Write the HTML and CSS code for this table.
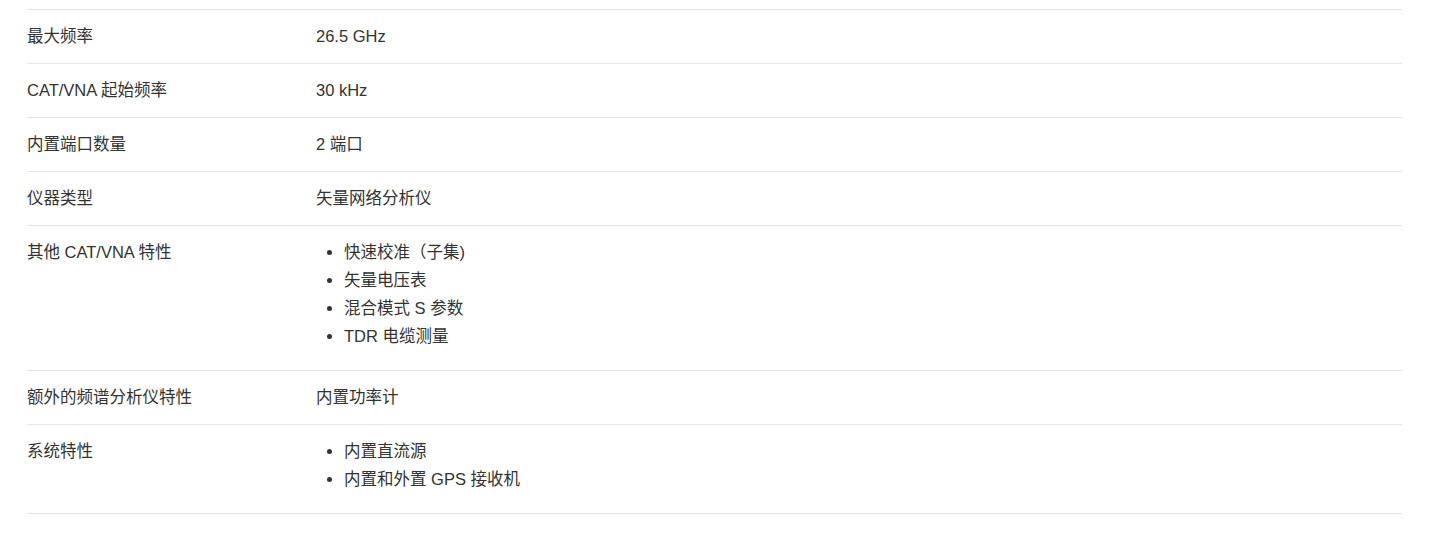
FILE: index.html
```html
<!DOCTYPE html>
<html lang="zh-CN">
<head>
<meta charset="utf-8">
<title>规格</title>
<link rel="stylesheet" href="styles.css">
</head>
<body>
<div class="specs">
  <div class="row">
    <div class="label">最大频率</div>
    <div class="value">26.5 GHz</div>
  </div>
  <div class="row">
    <div class="label">CAT/VNA 起始频率</div>
    <div class="value">30 kHz</div>
  </div>
  <div class="row">
    <div class="label">内置端口数量</div>
    <div class="value">2 端口</div>
  </div>
  <div class="row">
    <div class="label">仪器类型</div>
    <div class="value">矢量网络分析仪</div>
  </div>
  <div class="row">
    <div class="label">其他 CAT/VNA 特性</div>
    <div class="value">
      <ul class="list">
        <li>快速校准（子集)</li>
        <li>矢量电压表</li>
        <li>混合模式 S 参数</li>
        <li>TDR 电缆测量</li>
      </ul>
    </div>
  </div>
  <div class="row">
    <div class="label">额外的频谱分析仪特性</div>
    <div class="value">内置功率计</div>
  </div>
  <div class="row">
    <div class="label">系统特性</div>
    <div class="value">
      <ul class="list">
        <li>内置直流源</li>
        <li>内置和外置 GPS 接收机</li>
      </ul>
    </div>
  </div>
</div>
</body>
</html>
```

FILE: styles.css
```css
html, body {
  margin: 0;
  padding: 0;
  background: #ffffff;
}

body {
  font-family: "Liberation Sans", Arial, "Noto Sans CJK SC", sans-serif;
  font-size: 16.5px;
  color: #333333;
}

.specs {
  width: 1375px;
  margin: 9px 0 0 27px;
  border-bottom: 1px solid #e6e6e6;
}

.row {
  display: grid;
  grid-template-columns: 289px 1fr;
  border-top: 1px solid #e6e6e6;
  padding: 12px 0;
  line-height: 28px;
}

.label,
.value {
  margin: 0;
  min-height: 29px;
}

.list {
  margin: 0 0 8px 0;
  padding: 0 0 0 28px;
  list-style: disc;
}

.list li {
  line-height: 28px;
}
```
